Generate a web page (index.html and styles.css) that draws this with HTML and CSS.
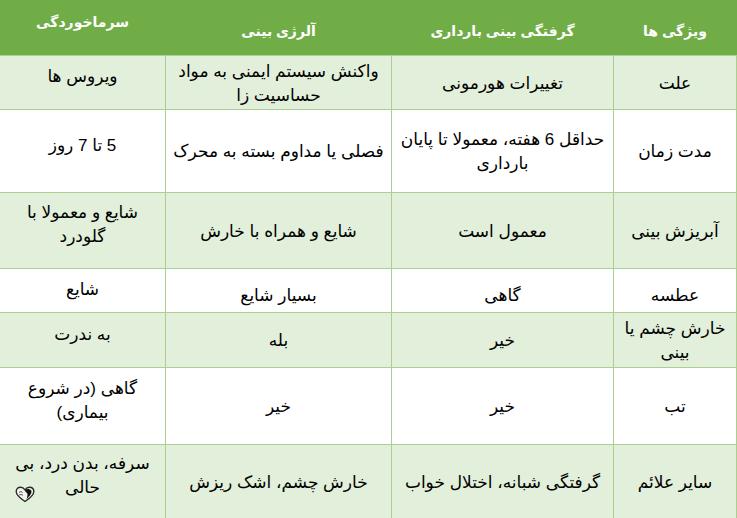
FILE: index.html
```html
<!DOCTYPE html>
<html lang="fa" dir="rtl">
<head>
<meta charset="utf-8">
<title>مقایسه گرفتگی بینی</title>
<link rel="stylesheet" href="styles.css">
</head>
<body>
<table class="cmp">
  <colgroup>
    <col class="w1"><col class="w2"><col class="w3"><col class="w4">
  </colgroup>
  <thead>
    <tr class="head">
      <th>ویژگی ها</th>
      <th>گرفتگی بینی بارداری</th>
      <th>آلرژی بینی</th>
      <th class="c4">سرماخوردگی</th>
    </tr>
  </thead>
  <tbody>
    <tr class="alt r1">
      <td>علت</td>
      <td>تغییرات هورمونی</td>
      <td>واکنش سیستم ایمنی به مواد<br>حساسیت زا</td>
      <td class="c4">ویروس ها</td>
    </tr>
    <tr class="r2">
      <td>مدت زمان</td>
      <td>حداقل 6 هفته، معمولا تا پایان<br>بارداری</td>
      <td>فصلی یا مداوم بسته به محرک</td>
      <td class="c4">5 تا 7 روز</td>
    </tr>
    <tr class="alt r3">
      <td>آبریزش بینی</td>
      <td>معمول است</td>
      <td>شایع و  همراه با خارش</td>
      <td class="c4">شایع و معمولا با<br>گلودرد</td>
    </tr>
    <tr class="r4">
      <td>عطسه</td>
      <td>گاهی</td>
      <td>بسیار شایع</td>
      <td class="c4">شایع</td>
    </tr>
    <tr class="alt r5">
      <td>خارش چشم یا<br>بینی</td>
      <td>خیر</td>
      <td>بله</td>
      <td class="c4">به ندرت</td>
    </tr>
    <tr class="r6">
      <td>تب</td>
      <td>خیر</td>
      <td>خیر</td>
      <td class="c4">گاهی (در شروع<br>بیماری)</td>
    </tr>
    <tr class="alt r7">
      <td>سایر علائم</td>
      <td>گرفتگی شبانه، اختلال خواب</td>
      <td>خارش چشم، اشک ریزش</td>
      <td class="c4 has-badge">سرفه، بدن درد، بی<br>حالی
        <svg class="badge" width="20" height="17" viewBox="0 0 20 17" aria-hidden="true">
          <path d="M10 15.5 C4.5 12 1.2 9 1.2 5.6 C1.2 2.8 3.2 1.2 5.6 1.2 C7.6 1.2 9 2.4 10 3.8 C11 2.4 12.4 1.2 14.4 1.2 C16.8 1.2 18.8 2.8 18.8 5.6 C18.8 9 15.5 12 10 15.5 Z" fill="#f4f4ee" stroke="#2a2a2a" stroke-width="1.4"/>
          <path d="M10.2 3.9 C12 2.6 15 2.6 16.2 4.6 C17.4 7 15.2 9.6 11.6 13.2 C12.2 10.6 13.4 8 11.4 6.6 C10.6 6 10 5.2 10.2 3.9 Z" fill="#111"/>
          <path d="M4 6.5 C5 5.5 6.5 5.5 7.5 6.5 M4.2 9 C5.4 8.2 6.8 8.4 8 9.4" fill="none" stroke="#333" stroke-width="0.9"/>
        </svg>
      </td>
    </tr>
  </tbody>
</table>
</body>
</html>
```
FILE: styles.css
```css
html, body {
  margin: 0;
  padding: 0;
  background: #ffffff;
}

body {
  font-family: "Liberation Sans", "DejaVu Sans", sans-serif;
  font-size: 17px;
  color: #000;
}

.cmp {
  width: 737px;
  table-layout: fixed;
  border-collapse: collapse;
}

.w1 { width: 123px; }
.w2 { width: 222px; }
.w3 { width: 226px; }
.w4 { width: 166px; }

.cmp th,
.cmp td {
  padding: 3px 6px 0 6px;
  text-align: center;
  vertical-align: middle;
  line-height: 24px;
  white-space: nowrap;
}

.cmp td {
  border: 1px solid #a9d08e;
}

.head { height: 55px; }
.r1 { height: 54px; }
.r2 { height: 83px; }
.r3 { height: 76px; }
.r4 { height: 44px; }
.r5 { height: 55px; }
.r6 { height: 77px; }
.r7 { height: 74px; }

.head th {
  background: #70ad47;
  color: #ffffff;
  font-weight: bold;
  font-size: 14px;
  padding-top: 7px;
}

.head th.c4 {
  padding-top: 0;
  padding-bottom: 11px;
}

.cmp td.c4 {
  padding-top: 0;
  padding-bottom: 10px;
}

.alt td {
  background: #e2efda;
}

.r4 td { padding-top: 12px; }
.r4 td.c4 { padding-top: 0; padding-bottom: 0; }

.has-badge {
  position: relative;
}

.badge {
  position: absolute;
  left: 15px;
  bottom: 15px;
}
```
